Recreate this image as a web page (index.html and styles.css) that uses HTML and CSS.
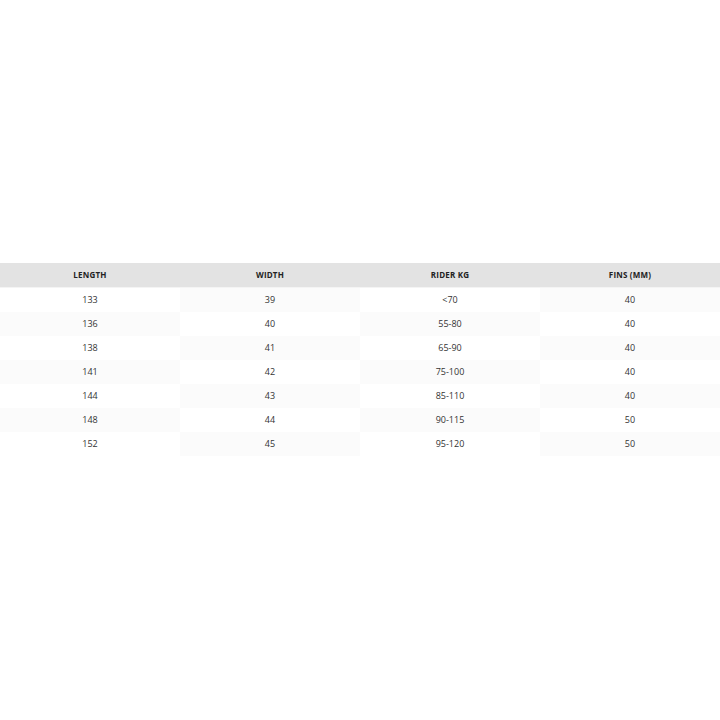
FILE: index.html
```html
<!DOCTYPE html>
<html>
<head>
<meta charset="utf-8">
<link rel="stylesheet" href="styles.css">
</head>
<body>
<main class="page">
  <table class="size-table">
    <thead>
      <tr><th>LENGTH</th><th>WIDTH</th><th>RIDER KG</th><th>FINS (MM)</th></tr>
    </thead>
    <tbody>
      <tr><td>133</td><td>39</td><td>&lt;70</td><td>40</td></tr>
      <tr><td>136</td><td>40</td><td>55-80</td><td>40</td></tr>
      <tr><td>138</td><td>41</td><td>65-90</td><td>40</td></tr>
      <tr><td>141</td><td>42</td><td>75-100</td><td>40</td></tr>
      <tr><td>144</td><td>43</td><td>85-110</td><td>40</td></tr>
      <tr><td>148</td><td>44</td><td>90-115</td><td>50</td></tr>
      <tr><td>152</td><td>45</td><td>95-120</td><td>50</td></tr>
    </tbody>
  </table>
</main>
</body>
</html>
```

FILE: styles.css
```css
html, body {
  margin: 0;
  padding: 0;
  background: #ffffff;
}
.page {
  width: 720px;
  height: 720px;
  display: flex;
  flex-direction: column;
  justify-content: flex-start;
  padding-top: 263px;
  box-sizing: border-box;
}
.size-table {
  width: 720px;
  border-collapse: collapse;
  table-layout: fixed;
  font-family: "Open Sans", "Noto Sans", sans-serif;
}
.size-table th,
.size-table td {
  width: 180px;
  height: 24px;
  padding: 0;
  text-align: center;
  vertical-align: middle;
}
.size-table th {
  background: #e3e3e3;
  color: #222;
  font-size: 8px;
  font-weight: 700;
  letter-spacing: 0.2px;
  border-bottom: 1px solid #f4f4f4;
  height: 24px;
  box-sizing: border-box;
}
.size-table td {
  font-size: 9px;
  color: #333;
  background: #ffffff;
}
.size-table tbody tr:nth-child(odd) td:nth-child(even),
.size-table tbody tr:nth-child(even) td:nth-child(odd) {
  background: #fbfbfb;
}
```
